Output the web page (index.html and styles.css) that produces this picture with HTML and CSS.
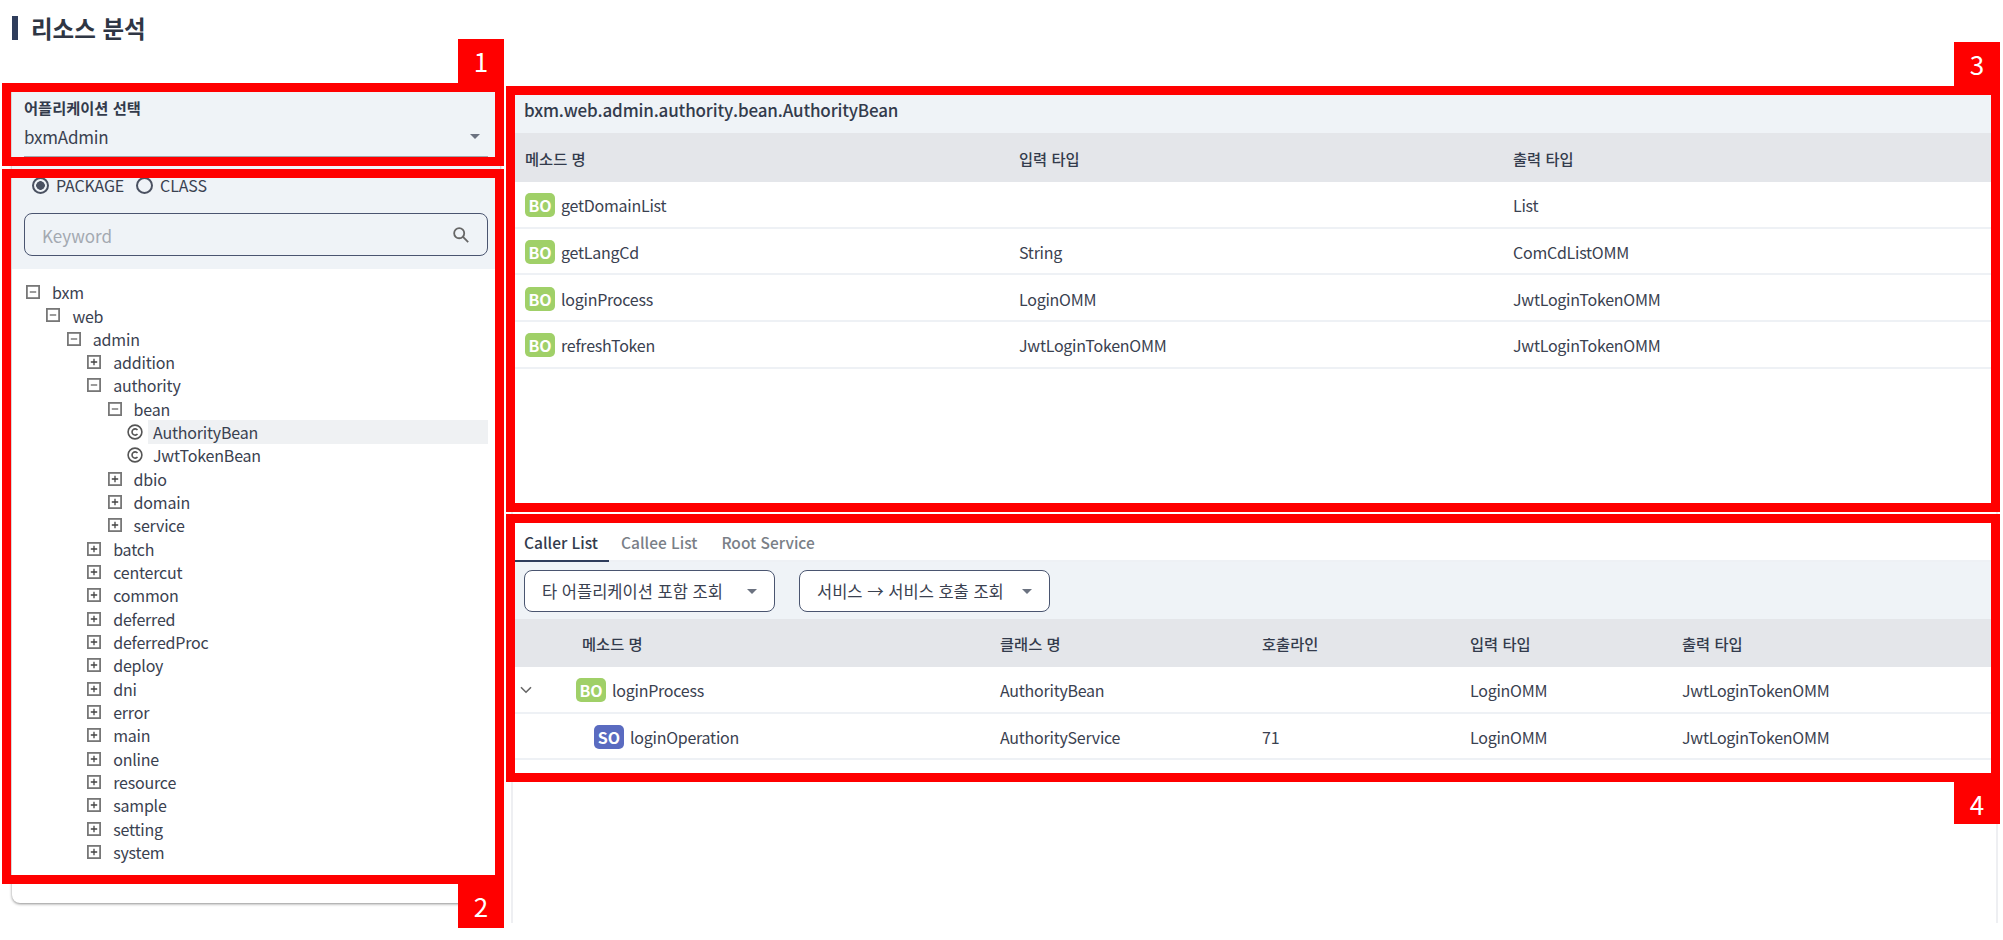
FILE: index.html
```html
<!DOCTYPE html>
<html lang="ko">
<head>
    <meta charset="UTF-8">
    <meta name="viewport" content="width=device-width, initial-scale=1.0">
    <title>리소스 분석</title>
    <link rel="stylesheet" href="styles.css">
</head>
<body>
    <svg class="icon-defs" xmlns="http://www.w3.org/2000/svg">
        <symbol id="tree-plus" viewBox="0 0 14 14">
            <rect x="0.9" y="0.9" width="12.2" height="12.2" fill="none" stroke="#777" stroke-width="1.8" />
            <path d="M3.8 7h6.4M7 3.8v6.4" stroke="#444" stroke-width="1.3" />
        </symbol>
        <symbol id="tree-minus" viewBox="0 0 14 14">
            <rect x="0.9" y="0.9" width="12.2" height="12.2" fill="none" stroke="#777" stroke-width="1.8" />
            <path d="M3.8 7h6.4" stroke="#666" stroke-width="1.3" />
        </symbol>
        <symbol id="tree-class" viewBox="0 0 16 16">
            <circle cx="8" cy="8" r="6.9" fill="none" stroke="#555" stroke-width="1.6" />
            <path d="M10.5 6a3.1 3.1 0 1 0 0 4" fill="none" stroke="#555" stroke-width="1.6" />
        </symbol>
    </svg>

    <h1 class="page-title">리소스 분석</h1>

    <div class="content">
        <aside class="side-card">
            <div class="side-filter">
                <label class="field-label">어플리케이션 선택</label>
                <div class="app-select">
                    <span>bxmAdmin</span>
                    <i class="caret"></i>
                </div>
                <div class="radio-group">
                    <span class="radio radio-on"></span><span class="radio-text">PACKAGE</span>
                    <span class="radio"></span><span class="radio-text">CLASS</span>
                </div>
                <div class="search-box">
                    <span class="search-hint">Keyword</span>
                    <svg class="search-icon" xmlns="http://www.w3.org/2000/svg" viewBox="0 0 20 20" fill="none" stroke="#666" stroke-width="2">
                        <circle cx="8" cy="8" r="5.6" />
                        <path d="M12.2 12.2l5.8 5.8" />
                    </svg>
                </div>
            </div>

            <ul class="tree">
                <li class="lv0"><svg class="tree-icon"><use href="#tree-minus" /></svg><span class="tree-text">bxm</span></li>
                <li class="lv1"><svg class="tree-icon"><use href="#tree-minus" /></svg><span class="tree-text">web</span></li>
                <li class="lv2"><svg class="tree-icon"><use href="#tree-minus" /></svg><span class="tree-text">admin</span></li>
                <li class="lv3"><svg class="tree-icon"><use href="#tree-plus" /></svg><span class="tree-text">addition</span></li>
                <li class="lv3"><svg class="tree-icon"><use href="#tree-minus" /></svg><span class="tree-text">authority</span></li>
                <li class="lv4"><svg class="tree-icon"><use href="#tree-minus" /></svg><span class="tree-text">bean</span></li>
                <li class="lv5"><svg class="class-icon"><use href="#tree-class" /></svg><span class="tree-text tree-selected">AuthorityBean</span></li>
                <li class="lv5"><svg class="class-icon"><use href="#tree-class" /></svg><span class="tree-text">JwtTokenBean</span></li>
                <li class="lv4"><svg class="tree-icon"><use href="#tree-plus" /></svg><span class="tree-text">dbio</span></li>
                <li class="lv4"><svg class="tree-icon"><use href="#tree-plus" /></svg><span class="tree-text">domain</span></li>
                <li class="lv4"><svg class="tree-icon"><use href="#tree-plus" /></svg><span class="tree-text">service</span></li>
                <li class="lv3"><svg class="tree-icon"><use href="#tree-plus" /></svg><span class="tree-text">batch</span></li>
                <li class="lv3"><svg class="tree-icon"><use href="#tree-plus" /></svg><span class="tree-text">centercut</span></li>
                <li class="lv3"><svg class="tree-icon"><use href="#tree-plus" /></svg><span class="tree-text">common</span></li>
                <li class="lv3"><svg class="tree-icon"><use href="#tree-plus" /></svg><span class="tree-text">deferred</span></li>
                <li class="lv3"><svg class="tree-icon"><use href="#tree-plus" /></svg><span class="tree-text">deferredProc</span></li>
                <li class="lv3"><svg class="tree-icon"><use href="#tree-plus" /></svg><span class="tree-text">deploy</span></li>
                <li class="lv3"><svg class="tree-icon"><use href="#tree-plus" /></svg><span class="tree-text">dni</span></li>
                <li class="lv3"><svg class="tree-icon"><use href="#tree-plus" /></svg><span class="tree-text">error</span></li>
                <li class="lv3"><svg class="tree-icon"><use href="#tree-plus" /></svg><span class="tree-text">main</span></li>
                <li class="lv3"><svg class="tree-icon"><use href="#tree-plus" /></svg><span class="tree-text">online</span></li>
                <li class="lv3"><svg class="tree-icon"><use href="#tree-plus" /></svg><span class="tree-text">resource</span></li>
                <li class="lv3"><svg class="tree-icon"><use href="#tree-plus" /></svg><span class="tree-text">sample</span></li>
                <li class="lv3"><svg class="tree-icon"><use href="#tree-plus" /></svg><span class="tree-text">setting</span></li>
                <li class="lv3"><svg class="tree-icon"><use href="#tree-plus" /></svg><span class="tree-text">system</span></li>
            </ul>
        </aside>

        <main class="detail-panel">
            <section class="method-section">
                <div class="class-name">bxm.web.admin.authority.bean.AuthorityBean</div>
                <div class="grid-head method-cols">
                    <div>메소드 명</div>
                    <div>입력 타입</div>
                    <div>출력 타입</div>
                </div>
                <div class="grid-row method-cols">
                    <div class="name-cell"><span class="badge badge-bo">BO</span>getDomainList</div>
                    <div></div>
                    <div>List</div>
                </div>
                <div class="grid-row method-cols">
                    <div class="name-cell"><span class="badge badge-bo">BO</span>getLangCd</div>
                    <div>String</div>
                    <div>ComCdListOMM</div>
                </div>
                <div class="grid-row method-cols">
                    <div class="name-cell"><span class="badge badge-bo">BO</span>loginProcess</div>
                    <div>LoginOMM</div>
                    <div>JwtLoginTokenOMM</div>
                </div>
                <div class="grid-row method-cols">
                    <div class="name-cell"><span class="badge badge-bo">BO</span>refreshToken</div>
                    <div>JwtLoginTokenOMM</div>
                    <div>JwtLoginTokenOMM</div>
                </div>
            </section>

            <section class="call-section">
                <div class="tabs">
                    <a class="tab tab-active">Caller List</a>
                    <a class="tab">Callee List</a>
                    <a class="tab">Root Service</a>
                </div>
                <div class="toolbar">
                    <div class="dropdown"><span>타 어플리케이션 포함 조회</span><i class="caret"></i></div>
                    <div class="dropdown"><span>서비스 → 서비스 호출 조회</span><i class="caret"></i></div>
                </div>
                <div class="grid-head call-cols">
                    <div></div>
                    <div>메소드 명</div>
                    <div>클래스 명</div>
                    <div>호출라인</div>
                    <div>입력 타입</div>
                    <div>출력 타입</div>
                </div>
                <div class="grid-row call-cols">
                    <div class="toggle-cell">
                        <svg class="chevron" xmlns="http://www.w3.org/2000/svg" viewBox="0 0 12 8" fill="none" stroke="#666" stroke-width="1.6">
                            <path d="M1 1.2l5 5 5-5" />
                        </svg>
                    </div>
                    <div class="name-cell root-cell"><span class="badge badge-bo">BO</span>loginProcess</div>
                    <div>AuthorityBean</div>
                    <div></div>
                    <div>LoginOMM</div>
                    <div>JwtLoginTokenOMM</div>
                </div>
                <div class="grid-row call-cols">
                    <div></div>
                    <div class="name-cell child-cell"><span class="badge badge-so">SO</span>loginOperation</div>
                    <div>AuthorityService</div>
                    <div>71</div>
                    <div>LoginOMM</div>
                    <div>JwtLoginTokenOMM</div>
                </div>
            </section>
        </main>
    </div>

    <!-- Red callouts laid over the screenshot -->
    <div class="callout callout-1"><span class="callout-num num-below-top">1</span></div>
    <div class="callout callout-2"><span class="callout-num">2</span></div>
    <div class="callout callout-3"><span class="callout-num num-below-top">3</span></div>
    <div class="callout callout-4"><span class="callout-num">4</span></div>
</body>
</html>
```

FILE: styles.css
```css
* {
    margin: 0;
    padding: 0;
    box-sizing: border-box;
}

body {
    font-family: "Noto Sans CJK KR", "Noto Sans", sans-serif;
    font-size: 16px;
    color: #3a4150;
    background: #fff;
    min-height: 940px;
    overflow: hidden;
}

.icon-defs {
    display: none;
}

.page-title {
    height: 24px;
    margin: 16px 0 0 12px;
    padding-left: 13px;
    border-left: 6px solid #2f3d5c;
    font-size: 23.5px;
    line-height: 24px;
    font-weight: 700;
    color: #2f3644;
}

.content {
    display: flex;
    align-items: flex-start;
    margin-top: 46px;
    padding-left: 12px;
}

/* left card */
.side-card {
    width: 488px;
    height: 817px;
    border-radius: 0 0 8px 8px;
    box-shadow: 0 1px 3px rgba(0, 0, 0, 0.45);
}

.side-filter {
    height: 183px;
    padding: 11px 12px 0;
    background: #eff3f7;
}

.field-label {
    display: block;
    font-size: 15.3px;
    line-height: 20px;
    font-weight: 700;
    color: #333b4c;
}

.app-select {
    display: flex;
    align-items: center;
    justify-content: space-between;
    height: 40px;
    padding-right: 8px;
    border-bottom: 1px solid #a3a7ad;
    font-size: 17px;
    letter-spacing: -0.2px;
}

.caret {
    width: 0;
    height: 0;
    border-left: 5px solid transparent;
    border-right: 5px solid transparent;
    border-top: 5px solid #6b7280;
}

.radio-group {
    display: flex;
    align-items: center;
    height: 20px;
    margin-top: 18px;
    padding-left: 8px;
    font-size: 16px;
    letter-spacing: -0.15px;
}

.radio {
    width: 17px;
    height: 17px;
    border: 2px solid #4a5161;
    border-radius: 50%;
}

.radio-on {
    background: radial-gradient(circle, #4a5161 0, #4a5161 4px, transparent 4.6px);
}

.radio-text {
    margin: 0 12px 0 7px;
}

.search-box {
    display: flex;
    align-items: center;
    justify-content: space-between;
    height: 43px;
    margin-top: 18px;
    padding: 0 17px;
    background: #eff3f7;
    border: 1.5px solid #4a5570;
    border-radius: 8px;
}

.search-hint {
    padding-top: 2px;
    font-size: 17px;
    color: #a3a9b1;
}

.search-icon {
    width: 18px;
    height: 18px;
}

.tree {
    list-style: none;
    padding: 11.5px 12px 0 14px;
}

.tree li {
    display: flex;
    align-items: center;
    height: 23.33px;
    font-size: 16px;
    letter-spacing: -0.2px;
}

.lv1 { padding-left: 20.4px; }
.lv2 { padding-left: 40.8px; }
.lv3 { padding-left: 61.2px; }
.lv4 { padding-left: 81.6px; }
.lv5 { padding-left: 101px; }

.tree-icon {
    width: 14px;
    height: 14px;
    flex-shrink: 0;
    margin-right: 7px;
}

.class-icon {
    width: 16px;
    height: 16px;
    flex-shrink: 0;
    margin-right: 5px;
}

.tree-text {
    flex: 1;
    padding-left: 5px;
    line-height: 24px;
}

.tree-selected {
    background: #eff1f3;
}

/* right panel */
.detail-panel {
    width: 1487px;
    height: 837px;
    margin-left: 11px;
    border-left: 2px solid #eeeff2;
    border-right: 2px solid #eeeff2;
}

.method-section {
    height: 438px;
}

.class-name {
    height: 47px;
    padding-left: 11px;
    background: #eff3f7;
    font-size: 17px;
    line-height: 47px;
    font-weight: 500;
    letter-spacing: -0.16px;
    color: #333b4c;
}

.grid-head,
.grid-row {
    display: grid;
    align-items: center;
}

.grid-head {
    height: 49px;
    background: #e4e6ea;
    font-size: 15.3px;
    font-weight: 500;
    color: #333b4c;
}

.grid-row {
    height: 46.67px;
    padding-top: 2px;
    border-bottom: 2px solid #eef1f5;
    font-size: 16px;
    letter-spacing: -0.25px;
}

.grid-head > div,
.grid-row > div {
    padding-left: 12px;
}

.method-cols {
    grid-template-columns: 494px 494px 1fr;
}

.call-cols {
    grid-template-columns: 57px 418px 262px 208px 212px 1fr;
}

.name-cell {
    display: flex;
    align-items: center;
}

.grid-row > .root-cell {
    padding-left: 6px;
}

.grid-row > .child-cell {
    padding-left: 24px;
}

.grid-row > .toggle-cell {
    display: flex;
    padding-left: 7px;
}

.chevron {
    width: 12px;
    height: 8px;
}

.badge {
    width: 30px;
    height: 24px;
    margin-right: 6px;
    border-radius: 5px;
    font-size: 16px;
    line-height: 24px;
    font-weight: 700;
    letter-spacing: 0;
    text-align: center;
    color: #fff;
}

.badge-bo {
    background: #a0d068;
}

.badge-so {
    background: #5a6bc0;
}

.tabs {
    display: flex;
    height: 38px;
    border-bottom: 2px solid #eef1f5;
}

.tab {
    height: 38px;
    padding: 0 11px;
    font-size: 15.5px;
    line-height: 36px;
    font-weight: 500;
    color: #7a7f87;
}

.tab + .tab {
    padding: 0 12px;
}

.tab-active {
    border-bottom: 2px solid #2f3d5c;
    color: #333b4c;
}

.toolbar {
    display: flex;
    gap: 24px;
    height: 57px;
    padding: 8px 11px;
    background: #eff3f7;
}

.dropdown {
    display: flex;
    align-items: center;
    justify-content: space-between;
    width: 251px;
    height: 42px;
    padding: 0 17px;
    background: #fff;
    border: 1.5px solid #4a5570;
    border-radius: 8px;
    font-size: 16.5px;
}

.toolbar + .grid-head {
    height: 48px;
}

/* callouts */
.callout {
    position: absolute;
    border: 9px solid #f00;
}

.callout-1 { left: 2px; top: 83px; width: 502px; height: 83px; }
.callout-2 { left: 2px; top: 169px; width: 502px; height: 715px; }
.callout-3 { left: 506px; top: 86px; width: 1494px; height: 426px; }
.callout-4 { left: 506px; top: 514px; width: 1494px; height: 268px; }

.callout-num {
    position: absolute;
    right: -9px;
    top: 100%;
    width: 46px;
    height: 44px;
    margin-top: 9px;
    background: #f00;
    color: #fff;
    font-size: 26px;
    line-height: 44px;
    text-align: center;
}

.callout-4 .callout-num {
    height: 42px;
}

.callout-num.num-below-top {
    top: auto;
    bottom: 100%;
    margin: 0 0 9px;
}
```
